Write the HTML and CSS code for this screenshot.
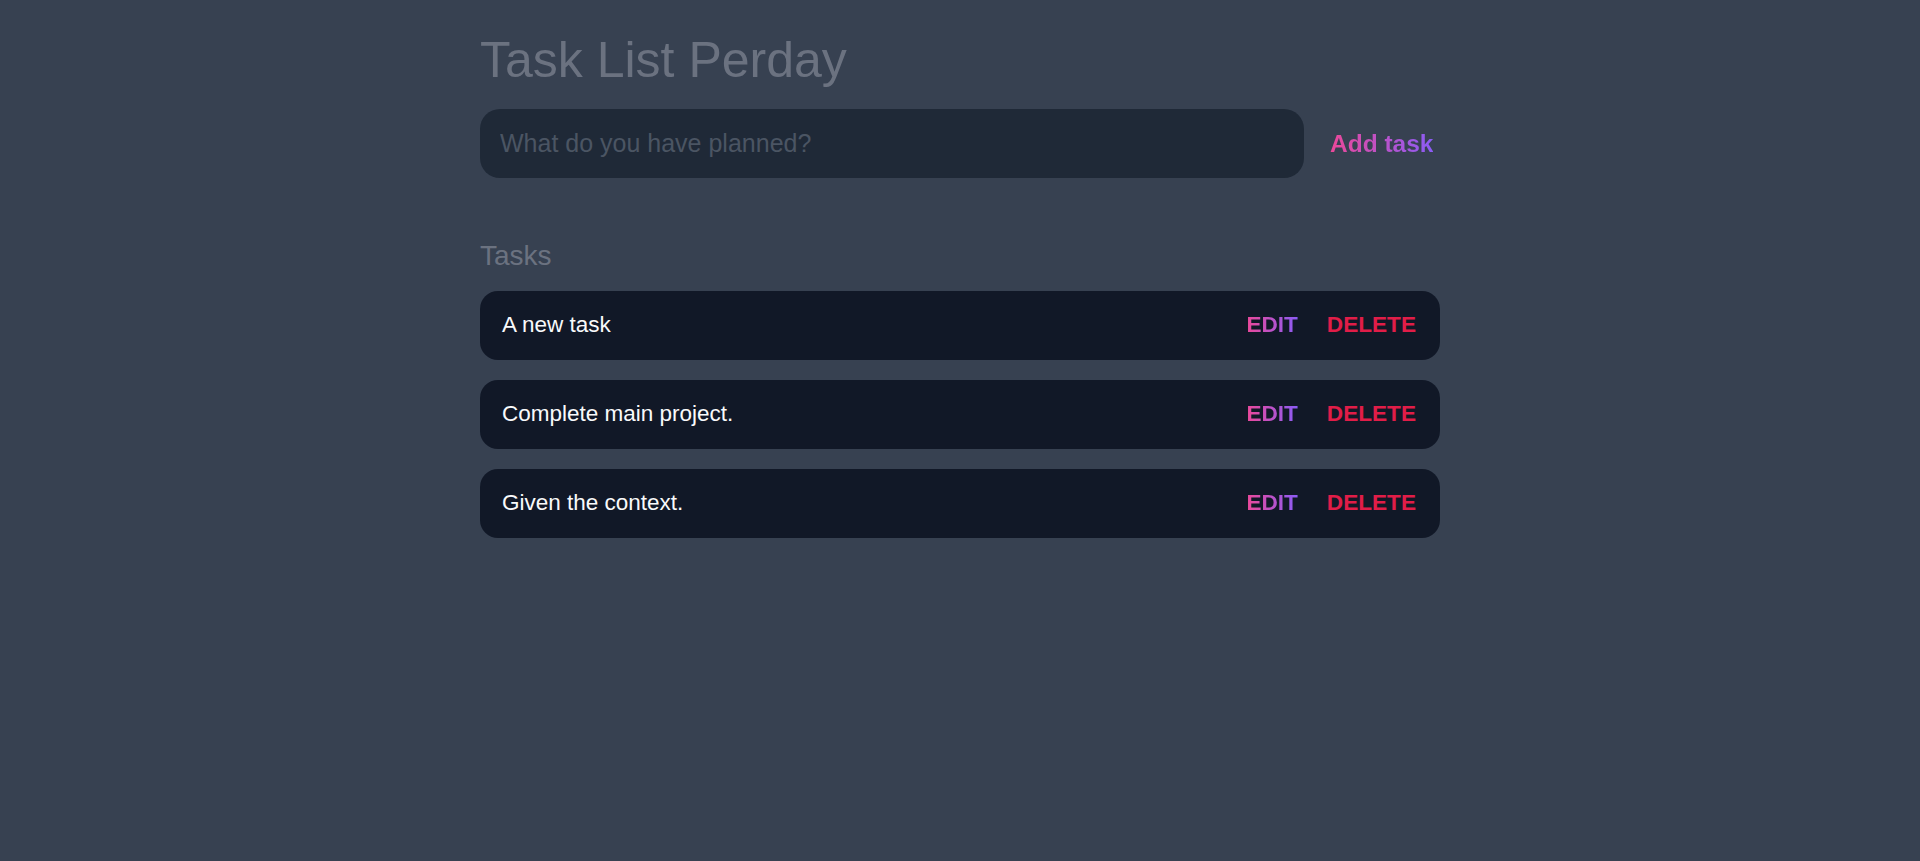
FILE: index.html
```html
<!DOCTYPE html>
<html lang="en">
<head>
<meta charset="utf-8">
<title>Task List Perday</title>
<link rel="stylesheet" href="styles.css">
</head>
<body>
<main class="app">
  <h1 class="title">Task List Perday</h1>
  <form class="new-task" onsubmit="return false">
    <input class="new-task-input" type="text" placeholder="What do you have planned?">
    <button class="add-btn" type="submit"><span class="grad">Add task</span></button>
  </form>
  <section class="task-list">
    <h2 class="list-title">Tasks</h2>
    <div class="tasks">
      <div class="task">
        <span class="task-text">A new task</span>
        <div class="actions">
          <button class="edit"><span class="grad">EDIT</span></button>
          <button class="delete">DELETE</button>
        </div>
      </div>
      <div class="task">
        <span class="task-text">Complete main project.</span>
        <div class="actions">
          <button class="edit"><span class="grad">EDIT</span></button>
          <button class="delete">DELETE</button>
        </div>
      </div>
      <div class="task">
        <span class="task-text">Given the context.</span>
        <div class="actions">
          <button class="edit"><span class="grad">EDIT</span></button>
          <button class="delete">DELETE</button>
        </div>
      </div>
    </div>
  </section>
</main>
</body>
</html>
```

FILE: styles.css
```css
* { box-sizing: border-box; }
html, body {
  margin: 0;
  padding: 0;
  height: 100%;
}
body {
  background: #374151;
  font-family: "Liberation Sans", Arial, sans-serif;
  color: #f3f4f6;
}
.app {
  width: 960px;
  margin: 0 auto;
  padding-top: 32px;
}
.title {
  margin: 0;
  font-size: 50px;
  font-weight: 400;
  line-height: 56px;
  color: #6b7280;
}
.new-task {
  display: flex;
  align-items: center;
  margin-top: 21px;
}
.new-task-input {
  flex: 0 0 824px;
  height: 69px;
  border: none;
  outline: none;
  border-radius: 20px;
  background: #1f2937;
  padding: 0 20px;
  font-family: inherit;
  font-size: 25px;
  color: #f3f4f6;
}
.new-task-input::placeholder {
  color: #4b5563;
}
.add-btn {
  flex: 1;
  text-align: left;
  border: none;
  background: none;
  padding: 0 0 0 26px;
  font-family: inherit;
  font-size: 24.5px;
  font-weight: 700;
  cursor: pointer;
}
.grad {
  background: linear-gradient(to right, #ec4899, #8b5cf6);
  -webkit-background-clip: text;
  background-clip: text;
  color: transparent;
}
.task-list {
  margin-top: 62px;
}
.list-title {
  margin: 0;
  font-size: 28px;
  font-weight: 400;
  line-height: 32px;
  color: #6b7280;
}
.tasks {
  display: flex;
  flex-direction: column;
  gap: 20.5px;
  margin-top: 19px;
}
.task {
  display: flex;
  align-items: center;
  justify-content: space-between;
  background: #111827;
  border-radius: 18px;
  padding: 22px 24px 22px 22px;
  height: 68.5px;
}
.task-text {
  font-size: 22.5px;
  line-height: 24.5px;
  color: #f9fafb;
}
.actions {
  display: flex;
  align-items: center;
  gap: 29px;
}
.actions button {
  border: none;
  background: none;
  padding: 0;
  font-family: inherit;
  font-size: 22.6px;
  font-weight: 700;
  line-height: 24.5px;
  cursor: pointer;
}
.delete {
  color: #e11d48;
}
```
